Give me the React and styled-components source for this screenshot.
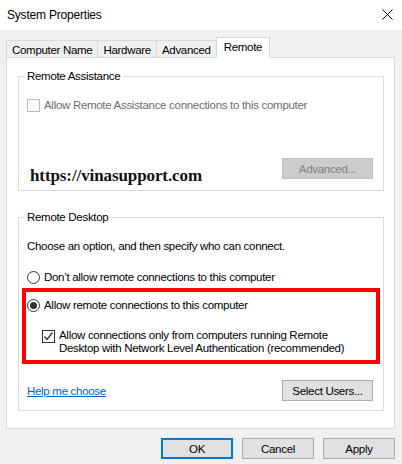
import styled, { createGlobalStyle } from 'styled-components';

const GlobalStyle = createGlobalStyle`
  html, body {
    margin: 0;
    padding: 0;
    background: #f0f0f0;
  }
  body {
    font-family: 'Liberation Sans', Arial, sans-serif;
    font-size: 11.5px;
    letter-spacing: -0.3px;
    color: #000;
  }
`;

function CloseIcon() {
  return (
    <svg width="11" height="11" viewBox="0 0 11 11">
      <path d="M0.5 0.5 L10.5 10.5 M10.5 0.5 L0.5 10.5" stroke="#000" strokeWidth="1" />
    </svg>
  );
}

function CheckMark() {
  return (
    <svg width="11" height="11" viewBox="0 0 11 11">
      <path d="M1.5 5.5 L4 8.5 L9.5 1.5" stroke="#333" strokeWidth="1.3" fill="none" />
    </svg>
  );
}

export default function App() {
  const tabs = ['Computer Name', 'Hardware', 'Advanced', 'Remote'];

  return (
    <>
      <GlobalStyle />
      <Window>
        <TitleBar>
          <Title>System Properties</Title>
          <CloseButton>
            <CloseIcon />
          </CloseButton>
        </TitleBar>
        <Body>
          <TabRow>
            {tabs.map((t) => (
              <Tab key={t} $active={t === 'Remote'}>
                {t}
              </Tab>
            ))}
          </TabRow>
          <Panel>
            <Group $height={115} $pad={11}>
              <Legend>Remote Assistance</Legend>
              <OptionRow $top={21} $disabled>
                <CheckBox $disabled />
                <span>Allow Remote Assistance connections to this computer</span>
              </OptionRow>
              <Spacer />
              <BottomRow $align="flex-start">
                <Watermark>https://vinasupport.com</Watermark>
                <Button $disabled>Advanced...</Button>
              </BottomRow>
            </Group>
            <Group $height={194} $top={26} $pad={9}>
              <Legend>Remote Desktop</Legend>
              <Hint>Choose an option, and then specify who can connect.</Hint>
              <OptionRow $top={17}>
                <Radio />
                <span>Don’t allow remote connections to this computer</span>
              </OptionRow>
              <Highlight>
                <OptionRow $top={0}>
                  <Radio $checked />
                  <span>Allow remote connections to this computer</span>
                </OptionRow>
                <SubOption>
                  <CheckBox>
                    <CheckMark />
                  </CheckBox>
                  <span>
                    Allow connections only from computers running Remote
                    <br />
                    Desktop with Network Level Authentication (recommended)
                  </span>
                </SubOption>
              </Highlight>
              <Spacer />
              <BottomRow>
                <HelpLink href="#">Help me choose</HelpLink>
                <Button>Select Users...</Button>
              </BottomRow>
            </Group>
          </Panel>
          <Footer>
            <Button $primary $wide>OK</Button>
            <Button $wide>Cancel</Button>
            <Button $wide>Apply</Button>
          </Footer>
        </Body>
      </Window>
    </>
  );
}

const Window = styled.div`
  width: 402px;
  height: 464px;
  display: flex;
  flex-direction: column;
  background: #f0f0f0;
  overflow: hidden;
`;

const TitleBar = styled.div`
  height: 30px;
  background: #fff;
  display: flex;
  align-items: center;
  justify-content: space-between;
  padding: 0 9px 0 7px;
  box-sizing: border-box;
`;

const Title = styled.div`
  font-size: 12px;
  letter-spacing: -0.2px;
  margin-top: -1px;
`;

const CloseButton = styled.div`
  display: flex;
  align-items: center;
  margin-top: -1px;
`;

const Body = styled.div`
  flex: 1;
  display: flex;
  flex-direction: column;
  padding: 7px 7px 0 6px;
`;

const TabRow = styled.div`
  display: flex;
  align-items: flex-end;
  height: 21px;
  padding-left: 1px;
  position: relative;
  z-index: 1;
  margin-bottom: -1px;
`;

const Tab = styled.div`
  box-sizing: border-box;
  height: ${(p) => (p.$active ? '21px' : '18px')};
  padding: ${(p) => (p.$active ? '2px 7px 0 7px' : '2px 5px 0 5px')};
  margin-left: -1px;
  border: 1px solid #d9d9d9;
  border-bottom: ${(p) => (p.$active ? '1px solid #fff' : '1px solid #d9d9d9')};
  background: ${(p) => (p.$active ? '#fff' : '#f0f0f0')};
  line-height: 14px;
  white-space: nowrap;
`;

const Panel = styled.div`
  box-sizing: border-box;
  height: 372px;
  background: #fff;
  border: 1px solid #d9d9d9;
  padding: 18px 10px 0 11px;
  display: flex;
  flex-direction: column;
`;

const Group = styled.div`
  position: relative;
  box-sizing: border-box;
  margin-top: ${(p) => p.$top || 0}px;
  height: ${(p) => p.$height}px;
  border: 1px solid #dcdcdc;
  padding: 0 10px ${(p) => p.$pad}px 8px;
  display: flex;
  flex-direction: column;
`;

const Legend = styled.div`
  position: absolute;
  top: -8px;
  left: 5px;
  padding: 0 3px;
  background: #fff;
  line-height: 14px;
`;

const OptionRow = styled.div`
  display: flex;
  align-items: center;
  gap: 4px;
  margin-top: ${(p) => p.$top ?? 16}px;
  color: ${(p) => (p.$disabled ? '#6d6d6d' : '#000')};
  line-height: 14px;
`;

const CheckBox = styled.div`
  box-sizing: border-box;
  width: 13px;
  height: 13px;
  flex: none;
  border: 1px solid ${(p) => (p.$disabled ? '#bcbcbc' : '#333')};
  background: #fff;
  display: flex;
  align-items: center;
  justify-content: center;
`;

const Radio = styled.div`
  box-sizing: border-box;
  width: 13px;
  height: 13px;
  flex: none;
  border-radius: 50%;
  border: 1px solid #333;
  background: #fff;
  display: flex;
  align-items: center;
  justify-content: center;

  &::after {
    content: '';
    width: 7px;
    height: 7px;
    border-radius: 50%;
    background: #333;
    display: ${(p) => (p.$checked ? 'block' : 'none')};
  }
`;

const Hint = styled.div`
  margin-top: 21px;
  line-height: 14px;
`;

const Highlight = styled.div`
  margin: 4px -7px 0 -5px;
  border: 4px solid #ff0000;
  padding: 6px 0 5px 1px;
`;

const SubOption = styled.div`
  display: flex;
  align-items: flex-start;
  gap: 4px;
  margin: 17px 0 0 15px;
  line-height: 13px;

  & > div {
    margin-top: 1px;
  }
`;

const Spacer = styled.div`
  flex: 1;
`;

const BottomRow = styled.div`
  display: flex;
  align-items: ${(p) => p.$align || 'center'};
  justify-content: space-between;
`;

const Watermark = styled.div`
  font-family: 'Liberation Serif', 'DejaVu Serif', serif;
  font-size: 17px;
  font-weight: bold;
  letter-spacing: -0.1px;
  line-height: 16px;
  margin: 10px 0 -5px 3px;
  color: #111;
`;

const HelpLink = styled.a`
  color: #0066cc;
  text-decoration: underline;
`;

const Button = styled.button`
  box-sizing: border-box;
  height: 21px;
  width: ${(p) => (p.$wide ? '72px' : '91px')};
  font-family: 'Liberation Sans', Arial, sans-serif;
  font-size: 11.5px;
  letter-spacing: -0.3px;
  padding: 0;
  background: ${(p) => (p.$disabled ? '#cccccc' : '#e1e1e1')};
  color: ${(p) => (p.$disabled ? '#838383' : '#000')};
  border: ${(p) => (p.$primary ? '2px solid #0078d7' : `1px solid ${p.$disabled ? '#bfbfbf' : '#adadad'}`)};
`;

const Footer = styled.div`
  display: flex;
  justify-content: flex-end;
  gap: 9px;
  padding-top: 9px;
`;
